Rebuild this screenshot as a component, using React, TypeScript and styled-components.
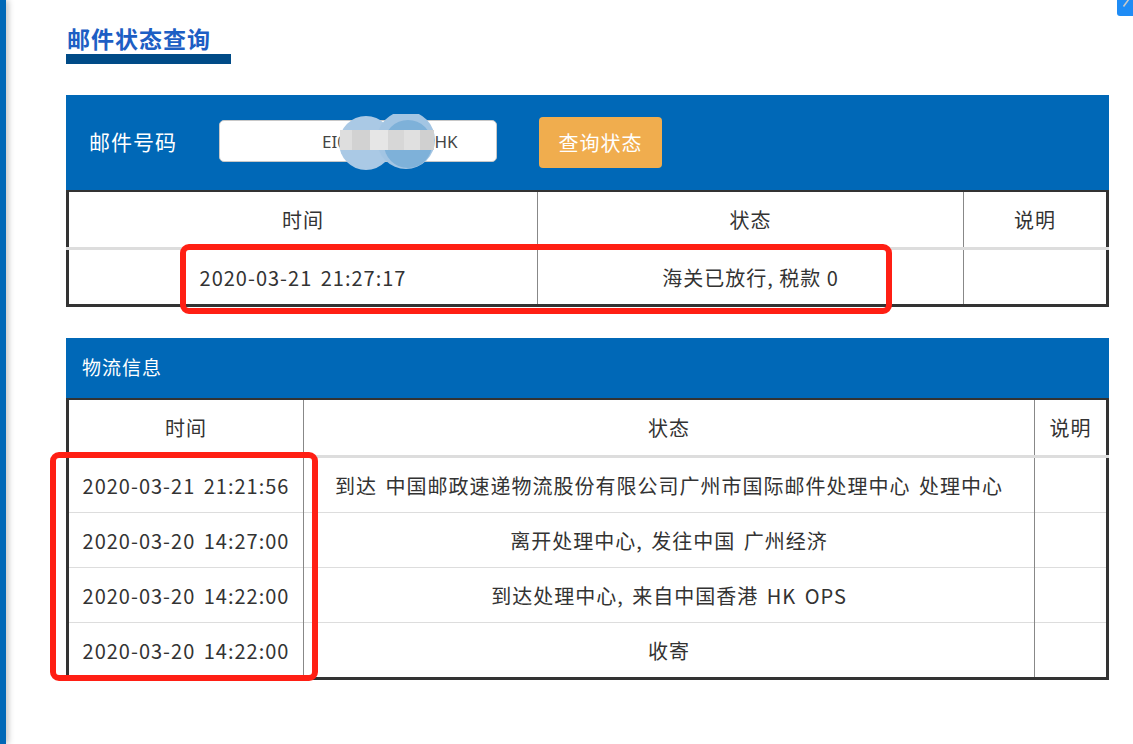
import React from 'react';
import styled, {createGlobalStyle} from 'styled-components';

const GlobalStyle = createGlobalStyle`
  html, body {
    margin: 0;
    padding: 0;
    background: #fff;
  }
  body {
    font-family: "Noto Sans CJK SC", "Noto Sans", sans-serif;
    color: #333;
  }
`;

const Page = styled.div`
  display: flex;
  min-height: 744px;
  position: relative;
`;

const SideBar = styled.div`
  width: 6px;
  flex: none;
  background: #0068b7;
  box-shadow: 2px 0 6px rgba(0, 0, 0, 0.28);
`;

const Corner = styled.div`
  position: absolute;
  top: 0;
  right: 0;
  width: 16px;
  height: 16px;
  background: #1f8cf5;
  border-bottom-left-radius: 3px;
  svg {
    display: block;
  }
`;

const Content = styled.main`
  width: 1043px;
  padding: 22px 0 0 60px;
`;

const Title = styled.h2`
  display: inline-block;
  margin: 0 0 31px;
  padding: 0 20px 0 1px;
  font-size: 23px;
  line-height: 32px;
  letter-spacing: 1px;
  font-weight: 700;
  color: #1d5ec4;
  border-bottom: 10px solid #004b87;
`;

const QueryBar = styled.div`
  display: flex;
  align-items: center;
  height: 95px;
  padding: 0 0 3px 23px;
  box-sizing: border-box;
  background: #0068b7;
`;

const Label = styled.span`
  width: 130px;
  font-size: 21px;
  line-height: 28px;
  letter-spacing: 1px;
  color: #fff;
`;

const InputBox = styled.div`
  position: relative;
  width: 278px;
  height: 42px;
  box-sizing: border-box;
  margin: 0 42px 0 0;
  padding-left: 102px;
  display: flex;
  align-items: center;
  background: #fff;
  border: 1px solid #c8c8c8;
  border-radius: 5px;
  font-family: "Noto Sans", sans-serif;
  font-size: 17px;
  color: #444;
  svg {
    position: absolute;
    left: 116px;
    top: -7px;
  }
`;

const QueryButton = styled.button`
  width: 123px;
  height: 51px;
  margin-top: 3px;
  border: none;
  border-radius: 4px;
  background: #f0ad4e;
  color: #fff;
  font-family: inherit;
  font-size: 20px;
  letter-spacing: 1px;
  cursor: pointer;
`;

const TableWrap = styled.div`
  position: relative;
`;

const Grid = styled.table`
  width: 100%;
  border-collapse: collapse;
  border: 3px solid #333;
  border-top-width: 2px;
  font-size: 20px;
  letter-spacing: 1px;
  color: #333;
  table-layout: fixed;

  th, td {
    border-left: 1px solid #888;
    border-right: 1px solid #888;
    text-align: center;
    font-weight: 400;
    padding: 0;
  }
  th {
    height: 55px;
    border-bottom: 3px solid #ddd;
  }
  td {
    height: 54px;
    border-top: 1px solid #ddd;
  }
`;

const Wide = styled.span`
  word-spacing: 3px;
`;

const SectionHead = styled.div`
  margin-top: 31px;
  height: 60px;
  display: flex;
  align-items: center;
  padding: 0 0 3px 16px;
  box-sizing: border-box;
  background: #0068b7;
  color: #fff;
  font-size: 19px;
  letter-spacing: 1px;
`;

const Mark = styled.div<{$l: number; $t: number; $w: number; $h: number}>`
  position: absolute;
  left: ${p => p.$l}px;
  top: ${p => p.$t}px;
  width: ${p => p.$w}px;
  height: ${p => p.$h}px;
  box-sizing: border-box;
  border: 6px solid #ff1f14;
  border-radius: 9px;
  pointer-events: none;
`;

const Blur = () => (
  <svg width="104" height="56" viewBox="0 0 104 56">
    <circle cx="30" cy="29" r="27" fill="#aac9e5"/>
    <circle cx="70" cy="26" r="29" fill="#a3c5e3"/>
    <circle cx="72" cy="30" r="24" fill="#7eb1d9"/>
    <rect x="4" y="16" width="12" height="20" fill="#dedede"/>
    <rect x="16" y="16" width="18" height="20" fill="#d2d2d2"/>
    <rect x="34" y="16" width="18" height="20" fill="#e6e6e6"/>
    <rect x="52" y="16" width="16" height="20" fill="#d7d7d7"/>
    <rect x="68" y="16" width="16" height="20" fill="#e0e0e0"/>
    <rect x="84" y="16" width="14" height="20" fill="#d0d0d0"/>
  </svg>
);

const customs = [{time: '2020-03-21 21:27:17', status: '海关已放行, 税款 0', note: ''}];

const tracks = [
  {time: '2020-03-21 21:21:56', status: '到达 中国邮政速递物流股份有限公司广州市国际邮件处理中心 处理中心'},
  {time: '2020-03-20 14:27:00', status: '离开处理中心, 发往中国 广州经济'},
  {time: '2020-03-20 14:22:00', status: '到达处理中心, 来自中国香港 HK OPS'},
  {time: '2020-03-20 14:22:00', status: '收寄'},
];

export default function App() {
  return (
    <Page>
      <GlobalStyle/>
      <SideBar/>
      <Content>
        <Title>邮件状态查询</Title>

        <QueryBar>
          <Label>邮件号码</Label>
          <InputBox>
            EI0000000000HK
            <Blur/>
          </InputBox>
          <QueryButton>查询状态</QueryButton>
        </QueryBar>
        <TableWrap>
          <Grid>
            <colgroup>
              <col style={{width: 470}}/>
              <col style={{width: 426}}/>
              <col/>
            </colgroup>
            <thead>
              <tr><th>时间</th><th>状态</th><th>说明</th></tr>
            </thead>
            <tbody>
              {customs.map((r, i) => (
                <tr key={i}><td><Wide>{r.time}</Wide></td><td>{r.status}</td><td>{r.note}</td></tr>
              ))}
            </tbody>
          </Grid>
          <Mark $l={114} $t={54} $w={712} $h={70}/>
        </TableWrap>

        <SectionHead>物流信息</SectionHead>
        <TableWrap>
          <Grid>
            <colgroup>
              <col style={{width: 236}}/>
              <col style={{width: 731}}/>
              <col/>
            </colgroup>
            <thead>
              <tr><th>时间</th><th>状态</th><th>说明</th></tr>
            </thead>
            <tbody>
              {tracks.map((r, i) => (
                <tr key={i}><td><Wide>{r.time}</Wide></td><td><Wide>{r.status}</Wide></td><td></td></tr>
              ))}
            </tbody>
          </Grid>
          <Mark $l={-16} $t={54} $w={268} $h={229}/>
        </TableWrap>
      </Content>
      <Corner>
        <svg width="16" height="16" viewBox="0 0 16 16">
          <path d="M12 -1 L6.5 6.5" stroke="#c9c9c9" strokeWidth="1.6" fill="none"/>
        </svg>
      </Corner>
    </Page>
  );
}
